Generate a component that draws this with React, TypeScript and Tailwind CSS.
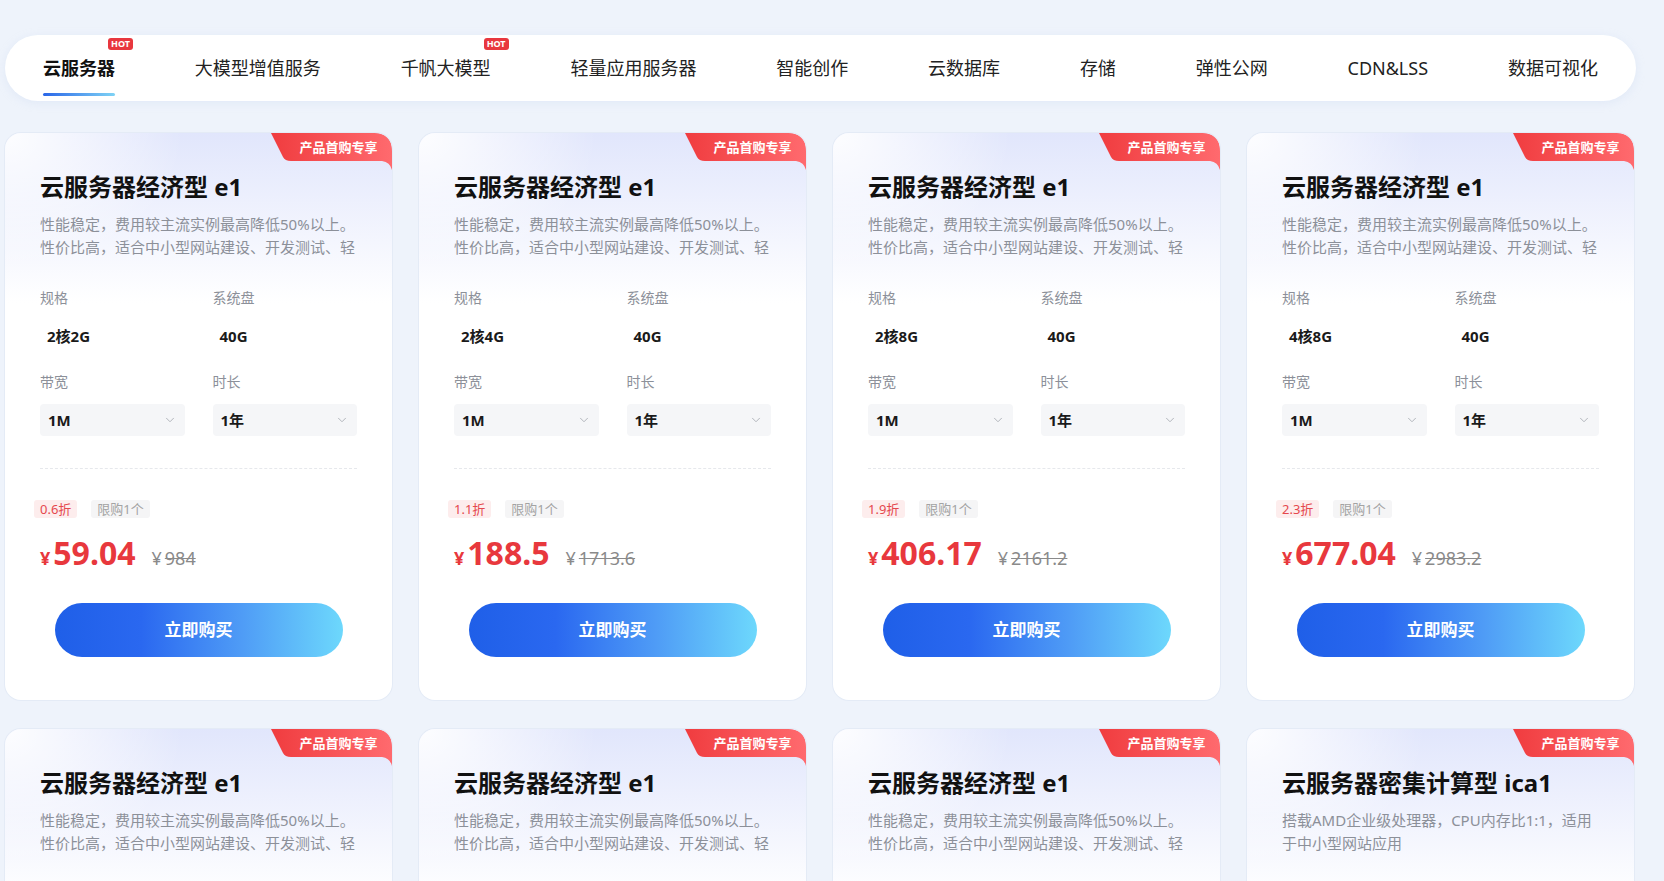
import React from "react";
import { ChevronDown } from "lucide-react";

const FONT = { fontFamily: '"Noto Sans","Noto Sans CJK SC",sans-serif' };

const navItems = [
  { label: "云服务器", active: true, hot: true },
  { label: "大模型增值服务" },
  { label: "千帆大模型", hot: true },
  { label: "轻量应用服务器" },
  { label: "智能创作" },
  { label: "云数据库" },
  { label: "存储" },
  { label: "弹性公网" },
  { label: "CDN&LSS" },
  { label: "数据可视化" },
];

type Card = {
  title: string;
  desc: string;
  spec: string;
  disk: string;
  discount: string;
  price: string;
  orig: string;
};

const e1Desc =
  "性能稳定，费用较主流实例最高降低50%以上。性价比高，适合中小型网站建设、开发测试、轻量级应用等场景。";

const cards: Card[] = [
  { title: "云服务器经济型 e1", desc: e1Desc, spec: "2核2G", disk: "40G", discount: "0.6折", price: "59.04", orig: "984" },
  { title: "云服务器经济型 e1", desc: e1Desc, spec: "2核4G", disk: "40G", discount: "1.1折", price: "188.5", orig: "1713.6" },
  { title: "云服务器经济型 e1", desc: e1Desc, spec: "2核8G", disk: "40G", discount: "1.9折", price: "406.17", orig: "2161.2" },
  { title: "云服务器经济型 e1", desc: e1Desc, spec: "4核8G", disk: "40G", discount: "2.3折", price: "677.04", orig: "2983.2" },
  { title: "云服务器经济型 e1", desc: e1Desc, spec: "2核2G", disk: "40G", discount: "0.6折", price: "59.04", orig: "984" },
  { title: "云服务器经济型 e1", desc: e1Desc, spec: "2核4G", disk: "40G", discount: "1.1折", price: "188.5", orig: "1713.6" },
  { title: "云服务器经济型 e1", desc: e1Desc, spec: "2核8G", disk: "40G", discount: "1.9折", price: "406.17", orig: "2161.2" },
  {
    title: "云服务器密集计算型 ica1",
    desc: "搭载AMD企业级处理器，CPU内存比1:1，适用于中小型网站应用",
    spec: "2核2G",
    disk: "40G",
    discount: "1.2折",
    price: "99.00",
    orig: "825",
  },
];

function Badge() {
  return (
    <div className="absolute top-0 right-0 w-[121px] h-[37px]">
      <svg width="121" height="37" viewBox="0 0 121 37" className="absolute inset-0">
        <defs>
          <linearGradient id="bg1" x1="0" y1="0" x2="1" y2="0">
            <stop offset="0" stopColor="#f03c3f" />
            <stop offset="1" stopColor="#ff6a6e" />
          </linearGradient>
        </defs>
        <path d="M0 0 H103 Q121 0 121 18 V37 Q119 29 111 28 H20 Q14 28 12 24 Z" fill="url(#bg1)" />
      </svg>
      <div className="absolute left-[14px] right-0 top-0 h-[28px] flex items-center justify-center text-[13px] font-bold text-white leading-none">
        产品首购专享
      </div>
    </div>
  );
}

function Select({ value }: { value: string }) {
  return (
    <div className="h-[32px] rounded-[4px] bg-[#f5f6f8] flex items-center justify-between pl-[8px] pr-[8px]">
      <span className="text-[15px] font-bold text-[#1a1a1a] leading-none">{value}</span>
      <ChevronDown size={14} strokeWidth={1.5} className="text-[#a8abb2]" />
    </div>
  );
}

function ProductCard({ c }: { c: Card }) {
  return (
    <div className="relative rounded-[16px] overflow-hidden bg-white shadow-[0_0_0_1px_rgba(225,232,245,0.8)] h-[567px]">
      <div className="absolute inset-x-0 top-0 h-[170px] bg-[linear-gradient(180deg,#e1e6fc_0%,rgba(255,255,255,0)_100%)]" />
      <div className="absolute left-0 top-0 w-[180px] h-[140px] bg-[radial-gradient(ellipse_at_0%_0%,rgba(255,255,255,0.95)_0%,rgba(255,255,255,0)_70%)]" />
      <Badge />
      <div className="relative px-[35px] pt-[38px] pb-[44px]">
        <div className="text-[24px] leading-[32px] font-bold text-[#111] whitespace-nowrap">{c.title}</div>
        <div className="mt-[10px] h-[46px] overflow-hidden text-[15px] leading-[23px] text-[#8c9099]">{c.desc}</div>
        <div className="grid grid-cols-2 gap-x-[28px] mt-[29px]">
          <div>
            <div className="text-[14px] leading-[20px] text-[#8c9099]">规格</div>
            <div className="mt-[17px] pl-[7px] text-[15px] leading-[22px] font-bold text-[#1a1a1a]">{c.spec}</div>
          </div>
          <div>
            <div className="text-[14px] leading-[20px] text-[#8c9099]">系统盘</div>
            <div className="mt-[17px] pl-[7px] text-[15px] leading-[22px] font-bold text-[#1a1a1a]">{c.disk}</div>
          </div>
          <div className="mt-[25px]">
            <div className="text-[14px] leading-[20px] text-[#8c9099]">带宽</div>
            <div className="mt-[12px]">
              <Select value="1M" />
            </div>
          </div>
          <div className="mt-[25px]">
            <div className="text-[14px] leading-[20px] text-[#8c9099]">时长</div>
            <div className="mt-[12px]">
              <Select value="1年" />
            </div>
          </div>
        </div>
        <div className="mt-[32px] border-t border-dashed border-[#e6e8ec]" />
        <div className="mt-[31px] flex items-center gap-[14px] -ml-[6px]">
          <span className="h-[18px] px-[6px] rounded-[3px] bg-[#fdeded] text-[#e5484d] text-[13px] leading-[18px]">{c.discount}</span>
          <span className="h-[18px] px-[6px] rounded-[3px] bg-[#f5f5f6] text-[#a3a3a3] text-[13px] leading-[18px]">限购1个</span>
        </div>
        <div className="mt-[15px] h-[40px] flex items-baseline">
          <span className="text-[18px] font-bold text-[#e8383d] mr-[3px]">¥</span>
          <span className="text-[32px] font-bold text-[#e8383d] leading-[40px]">{c.price}</span>
          <span className="ml-[16px] text-[18px] text-[#8a8a8a]">¥</span>
          <span className="ml-[3px] text-[18px] text-[#8a8a8a] line-through">{c.orig}</span>
        </div>
        <div className="mt-[30px] flex justify-center">
          <button className="w-[288px] h-[54px] rounded-full bg-[linear-gradient(90deg,#1f5fe8_0%,#2a68f0_30%,#4f9cf6_65%,#6dd8fc_100%)] text-white text-[17px] font-bold">
            立即购买
          </button>
        </div>
      </div>
    </div>
  );
}

export default function App() {
  return (
    <div style={FONT} className="w-[1664px] h-[881px] overflow-hidden bg-[#eef3fb]">
      <div className="ml-[5px] w-[1631px] pt-[35px]">
        <nav className="h-[66px] rounded-full bg-white shadow-[0_2px_8px_rgba(200,215,240,0.35)] flex items-center justify-between pl-[38px] pr-[38px]">
          {navItems.map((n) => (
            <div key={n.label} className="relative">
              <span
                className={
                  n.active
                    ? "text-[18px] leading-[24px] font-bold text-[#111]"
                    : "text-[18px] leading-[24px] text-[#222]"
                }
              >
                {n.label}
              </span>
              {n.hot && (
                <span className="absolute left-[calc(100%-7px)] -top-[18px] h-[12px] px-[3px] rounded-[3px] bg-[#e8373e] text-white text-[9px] font-bold leading-[12px]">
                  HOT
                </span>
              )}
              {n.active && (
                <span className="absolute left-0 right-0 top-[37px] h-[3px] rounded-full bg-[linear-gradient(90deg,#2a66e8,#7fd3f5)]" />
              )}
            </div>
          ))}
        </nav>
        <div className="mt-[32px] w-[1629px] grid grid-cols-4 gap-x-[27px] gap-y-[29px]">
          {cards.map((c, i) => (
            <ProductCard key={i} c={c} />
          ))}
        </div>
      </div>
    </div>
  );
}
